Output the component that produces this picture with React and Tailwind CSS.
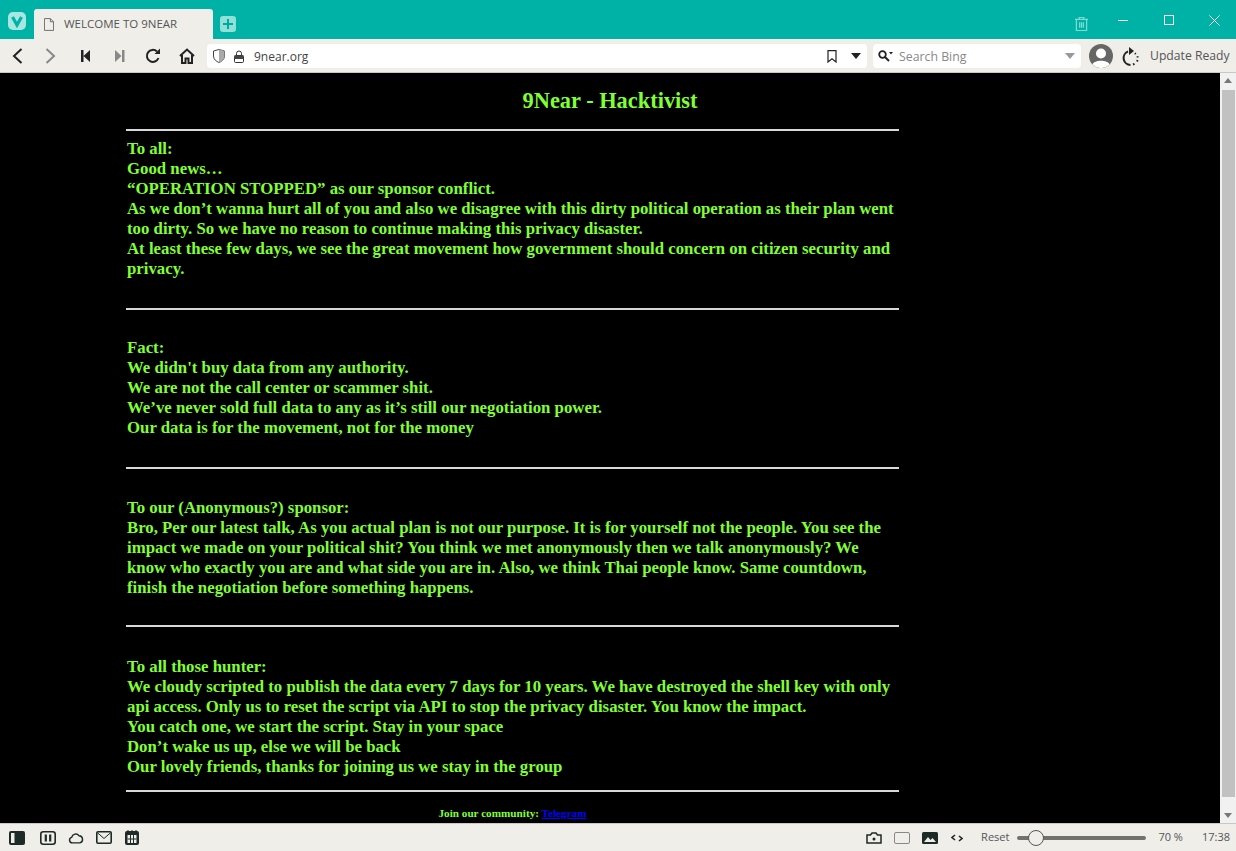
import React from "react";

const ui = "font-['Open_Sans','Noto_Sans',sans-serif]";

function Rule({ className = "" }) {
  return <div className={`h-[2px] bg-[#d8d8d8] ${className}`} />;
}

function Lines({ lines, className = "" }) {
  return (
    <div className={className}>
      {lines.map((line) => (
        <p key={line}>{line}</p>
      ))}
    </div>
  );
}

function TitleBar() {
  return (
    <div className="h-[39px] bg-[#00b2a6] flex items-end relative">
      <div className="w-[34px] h-[39px] flex items-center justify-center pt-[3px]">
        <svg width="18" height="18" viewBox="0 0 18 18">
          <rect width="18" height="18" rx="5" fill="#a8e6e1" />
          <path d="M4.500 5 L9 13 L13.500 5" fill="none" stroke="#00b2a6" strokeWidth="3.200" />
        </svg>
      </div>
      <div className="w-[179px] h-[30px] bg-[#efeee9] rounded-t-[3px] flex items-center pl-[10px]">
        <svg width="10" height="13" viewBox="0 0 11 14" className="shrink-0">
          <path d="M.5.5 H7 L10.500 4 V13.500 H.5 Z M7 .5 V4 H10.500" fill="none" stroke="#666" />
        </svg>
        <span className={`ml-[10px] text-[11.5px] text-[#555] ${ui}`}>WELCOME TO 9NEAR</span>
      </div>
      <div className="ml-[7px] mb-[7px] w-4 h-4 bg-[#8ee0d9] rounded-[3px] flex items-center justify-center">
        <svg width="10" height="10" viewBox="0 0 10 10">
          <path d="M5 0 V10 M0 5 H10" stroke="#00a89d" strokeWidth="2" />
        </svg>
      </div>
      <div className="ml-auto h-full flex items-start">
        <svg width="13" height="16" viewBox="0 0 14 16" className="mt-[16px] mr-[30px]" fill="none" stroke="#7fdcd5" strokeWidth="1.300">
          <path d="M0 3 H14 M4.500 3 V1 H9.500 V3 M1.500 3 V15 H12.500 V3 M5 6 V12 M7 6 V12 M9 6 V12" />
        </svg>
        <div className="w-[10px] h-[1px] bg-white mt-[20px] mr-[36px]" />
        <div className="w-[10px] h-[10px] border border-white mt-[15px] mr-[35px]" />
        <svg width="11" height="11" viewBox="0 0 11 11" className="mt-[15px] mr-[16px]">
          <path d="M.5.5 L10.500 10.500 M10.500.5 L.5 10.500" stroke="#fff" />
        </svg>
      </div>
    </div>
  );
}

function ToolBar() {
  return (
    <div className="h-[34px] bg-[#efeee9] border-b border-[#c9c8c3] flex items-center pt-[1px]">
      <div className="w-[207px] h-full shrink-0 flex items-center pl-[11px]">
        <svg width="13" height="16" viewBox="0 0 13 16" fill="none" stroke="#222" strokeWidth="2">
          <path d="M10.500 1 L3 8 L10.500 15" />
        </svg>
        <svg width="13" height="16" viewBox="0 0 13 16" fill="none" stroke="#888" strokeWidth="2" className="ml-[20px]">
          <path d="M2.500 1 L10 8 L2.500 15" />
        </svg>
        <svg width="10" height="12" viewBox="0 0 10 12" fill="#222" className="ml-[24px]">
          <path d="M0 0 H2.500 V12 H0 Z M9 0 V12 L2.500 6 Z" />
        </svg>
        <svg width="10" height="12" viewBox="0 0 10 12" fill="#888" className="ml-[24px]">
          <path d="M0 0 V12 L6.500 6 Z M7 0 H9.500 V12 H7 Z" />
        </svg>
        <svg width="16" height="16" viewBox="0 0 16 16" fill="none" stroke="#222" strokeWidth="2" className="ml-[20px]">
          <path d="M13.500 10 A6 6 0 1 1 12 3.500" />
          <path d="M15 0.500 V6 H9.500 Z" fill="#222" stroke="none" />
        </svg>
        <svg width="16" height="16" viewBox="0 0 16 16" fill="none" stroke="#222" strokeWidth="2" className="ml-[18px]">
          <path d="M1 8 L8 1.500 L15 8 M3 7 V15 H6.500 V10.500 H9.500 V15 H13 V7" />
        </svg>
      </div>
      <div className={`w-[660px] h-6 bg-white rounded-[4px] flex items-center shrink-0 ${ui}`}>
        <svg width="12" height="14" viewBox="0 0 12 14" className="ml-[6px]" fill="none" stroke="#444">
          <path d="M.5 2 L6 .5 L11.500 2 V7 C11.500 10.500 8.500 12.500 6 13.500 C3.500 12.500 .5 10.500 .5 7 Z" />
          <path d="M6 .5 L11.500 2 V7 C11.500 10.500 8.500 12.500 6 13.500 Z" fill="#aaa" stroke="none" />
        </svg>
        <svg width="10" height="13" viewBox="0 0 10 13" className="ml-[9px]" fill="none" stroke="#333">
          <rect x=".5" y="5.500" width="9" height="7" rx="1" fill="#fff" />
          <path d="M2.500 5.500 V3.500 A2.500 2.500 0 0 1 7.500 3.500 V5.500" />
          <path d="M.5 5.500 H9.500 V9 H.5 Z" fill="#444" stroke="none" />
        </svg>
        <span className="ml-[10px] mt-[2px] text-[12px] text-[#444]">9near.org</span>
        <svg width="10" height="13" viewBox="0 0 10 13" className="ml-auto" fill="none" stroke="#222" strokeWidth="1.200">
          <path d="M1 .6 H9 V12 L5 8.800 L1 12 Z" />
        </svg>
        <svg width="10" height="6" viewBox="0 0 10 6" className="ml-[14px] mr-[6px]" fill="#222">
          <path d="M0 0 H10 L5 6 Z" />
        </svg>
      </div>
      <div className={`ml-[6px] w-[208px] h-6 bg-white rounded-[4px] flex items-center shrink-0 ${ui}`}>
        <svg width="16" height="12" viewBox="0 0 16 12" className="ml-[5px]">
          <circle cx="4.500" cy="4.500" r="3.300" fill="none" stroke="#222" strokeWidth="1.800" />
          <path d="M7 7 L11 11" stroke="#222" strokeWidth="2" />
          <path d="M11 2 H15 L13 4.500 Z" fill="#222" />
        </svg>
        <span className="ml-[5px] mt-[2px] text-[12.300px] text-[#888]">Search Bing</span>
        <svg width="10" height="6" viewBox="0 0 10 6" className="ml-auto mr-[6px]" fill="#999">
          <path d="M0 0 H10 L5 6 Z" />
        </svg>
      </div>
      <svg width="24" height="24" viewBox="0 0 24 24" className="ml-[8px] shrink-0">
        <circle cx="12" cy="12" r="12" fill="#666" />
        <circle cx="12" cy="9.500" r="5" fill="#fff" />
        <path d="M3.500 20.500 C5 15.500 19 15.500 20.500 20.500 A12 12 0 0 1 3.500 20.500 Z" fill="#fff" />
      </svg>
      <svg width="17" height="19" viewBox="0 0 17 19" className="ml-[9px] shrink-0" fill="none" stroke="#222" strokeWidth="2">
        <path d="M6 4.500 A7 7 0 0 0 8.500 18" />
        <path d="M11 17.500 L12.500 16.800 M15 14.500 L15.600 13.200 M15.800 10.500 L15.400 9.200 M13.800 7 L12.800 6.200" />
        <path d="M7 0 L12 4 L7 8 Z" fill="#222" stroke="none" />
      </svg>
      <span className={`ml-[11px] mt-[1px] text-[12.200px] text-[#555] whitespace-nowrap ${ui}`}>Update Ready</span>
    </div>
  );
}

function Scrollbar() {
  return (
    <div className="w-[16px] bg-[#f1f1f1] flex flex-col items-center shrink-0">
      <svg width="8" height="5" viewBox="0 0 8 5" className="mt-[5px]" fill="#777">
        <path d="M0 5 H8 L4 0 Z" />
      </svg>
      <div className="w-[13px] h-[707px] bg-[#c1c1c1] mt-[7px]" />
      <svg width="8" height="5" viewBox="0 0 8 5" className="mt-auto mb-[5px]" fill="#777">
        <path d="M0 0 H8 L4 5 Z" />
      </svg>
    </div>
  );
}

function Page() {
  return (
    <div className="flex-1 bg-black text-[#80ff33] font-['Liberation_Serif',serif] font-bold overflow-hidden">
      <h1 className="text-[22.4px] leading-[27px] text-center pt-[14px]">9Near - Hacktivist</h1>
      <div className="ml-[126px] w-[773px] text-[16.8px] leading-[20px]">
        <Rule className="mt-[15px]" />
        <Lines
          className="mt-[8px] pl-[1px]"
          lines={[
            "To all:",
            "Good news…",
            "“OPERATION STOPPED” as our sponsor conflict.",
            "As we don’t wanna hurt all of you and also we disagree with this dirty political operation as their plan went too dirty. So we have no reason to continue making this privacy disaster.",
            "At least these few days, we see the great movement how government should concern on citizen security and privacy.",
          ]}
        />
        <Rule className="mt-[29px]" />
        <Lines
          className="mt-[28px] pl-[1px]"
          lines={[
            "Fact:",
            "We didn't buy data from any authority.",
            "We are not the call center or scammer shit.",
            "We’ve never sold full data to any as it’s still our negotiation power.",
            "Our data is for the movement, not for the money",
          ]}
        />
        <Rule className="mt-[29px]" />
        <Lines
          className="mt-[29px] pl-[1px]"
          lines={[
            "To our (Anonymous?) sponsor:",
            "Bro, Per our latest talk, As you actual plan is not our purpose. It is for yourself not the people. You see the impact we made on your political shit? You think we met anonymously then we talk anonymously? We know who exactly you are and what side you are in. Also, we think Thai people know. Same countdown, finish the negotiation before something happens.",
          ]}
        />
        <Rule className="mt-[27px]" />
        <Lines
          className="mt-[30px] pl-[1px]"
          lines={[
            "To all those hunter:",
            "We cloudy scripted to publish the data every 7 days for 10 years. We have destroyed the shell key with only api access. Only us to reset the script via API to stop the privacy disaster. You know the impact.",
            "You catch one, we start the script. Stay in your space",
            "Don’t wake us up, else we will be back",
            "Our lovely friends, thanks for joining us we stay in the group",
          ]}
        />
        <Rule className="mt-[13px]" />
        <p className="text-[11.2px] leading-[14px] text-center mt-[14px]">
          Join our community: <a href="#" className="text-[#0000ff] underline">Telegram</a>
        </p>
      </div>
    </div>
  );
}

function StatusBar() {
  return (
    <div className={`h-[28px] bg-[#efeee9] border-t border-[#c9c8c3] flex items-center text-[11px] text-[#555] ${ui}`}>
      <div className="flex items-center pl-[9px]">
        <svg width="16" height="14" viewBox="0 0 16 14">
          <rect width="16" height="14" rx="2" fill="#1c2b27" />
          <rect x="2" y="2" width="3.500" height="10" fill="#efeee9" />
        </svg>
        <svg width="16" height="14" viewBox="0 0 16 14" className="ml-[15px]" fill="none" stroke="#1c2b27" strokeWidth="1.600">
          <rect x=".8" y=".8" width="14.400" height="12.400" rx="2.500" />
          <path d="M5.800 3.500 V10.500 M10.200 3.500 V10.500" strokeWidth="2.200" />
        </svg>
        <svg width="16" height="12" viewBox="0 0 14 11" className="ml-[12px]" fill="none" stroke="#1c2b27" strokeWidth="1.300">
          <path d="M3.500 10 A2.600 2.600 0 0 1 3 4.900 A3.800 3.800 0 0 1 9.800 3.500 A3.300 3.300 0 0 1 10.500 10 Z" />
        </svg>
        <svg width="16" height="13" viewBox="0 0 16 13" className="ml-[12px]" fill="none" stroke="#1c2b27">
          <rect x=".8" y=".8" width="14.400" height="11.400" rx="1.200" strokeWidth="1.600" />
          <path d="M1.500 1.800 L8 7.500 L14.500 1.800" strokeWidth="1" />
        </svg>
        <svg width="14" height="15" viewBox="0 0 14 15" className="ml-[13px]">
          <rect y="1" width="14" height="14" rx="2" fill="#1c2b27" />
          <path d="M2.500 0 H3.500 V2 H2.500 Z M6.500 0 H7.500 V2 H6.500 Z M10.500 0 H11.500 V2 H10.500 Z" fill="#1c2b27" />
          <path d="M2.500 5 H11.500 V13 H2.500 Z" fill="#efeee9" />
          <path d="M5.500 5 V13 M8.500 5 V13 M2.500 9 H11.500" stroke="#1c2b27" />
        </svg>
      </div>
      <div className="ml-auto flex items-center">
        <svg width="16" height="12" viewBox="0 0 16 12" fill="none" stroke="#1c2b27" strokeWidth="1.500">
          <path d="M1 3 H4.500 L6 1 H10 L11.500 3 H15 V11 H1 Z" />
          <circle cx="8" cy="7" r="1.500" fill="#1c2b27" stroke="none" />
        </svg>
        <div className="ml-[12px] w-4 h-3 border-[1.500px] border-[#888] rounded-[2px]" />
        <svg width="16" height="12" viewBox="0 0 16 12" className="ml-[12px]">
          <rect width="16" height="12" rx="1.500" fill="#1c2b27" />
          <path d="M2 10 L6 5 L8.500 8 L10.500 6 L14 10 Z" fill="#efeee9" />
        </svg>
        <svg width="12" height="8" viewBox="0 0 12 8" className="ml-[13px]" fill="none" stroke="#1c2b27" strokeWidth="1.600">
          <path d="M4 1 L1 3.500 L4 6 M8 2 L11 4.500 L8 7" />
        </svg>
        <span className="ml-[18px]">Reset</span>
        <div className="ml-[8px] w-[129px] h-[4px] rounded-full bg-[#70736c] relative">
          <div className="absolute left-[11px] top-[-6px] w-4 h-4 rounded-full bg-[#efeee9] border border-[#555]" />
        </div>
        <span className="ml-[12px]">70 %</span>
        <span className="ml-[19px] mr-[6px]">17:38</span>
      </div>
    </div>
  );
}

export default function App() {
  return (
    <div className="w-[1236px] h-[851px] flex flex-col overflow-hidden">
      <TitleBar />
      <ToolBar />
      <div className="h-[750px] flex">
        <Page />
        <Scrollbar />
      </div>
      <StatusBar />
    </div>
  );
}
